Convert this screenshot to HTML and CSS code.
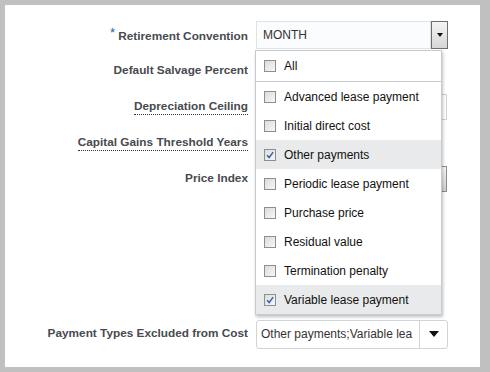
FILE: index.html
```html
<!DOCTYPE html>
<html>
<head>
<meta charset="utf-8">
<link rel="stylesheet" href="styles.css">
</head>
<body>
<div class="frame">
  <div class="form">
    <div class="row r1">
      <label class="lbl"><span class="req">*</span> Retirement Convention</label>
      <div class="field">
        <div class="select1">
          <span class="sel-text">MONTH</span>
          <span class="sel-btn"><span class="tri-s"></span></span>
        </div>
      </div>
    </div>
    <div class="row r2">
      <label class="lbl">Default Salvage Percent</label>
      <div class="field"><div class="input narrow"></div></div>
    </div>
    <div class="row r3">
      <label class="lbl"><span class="dotted">Depreciation Ceiling</span></label>
      <div class="field"><div class="input wide"></div></div>
    </div>
    <div class="row r4">
      <label class="lbl"><span class="dotted">Capital Gains Threshold Years</span></label>
      <div class="field"><div class="input narrow"></div></div>
    </div>
    <div class="row r5">
      <label class="lbl">Price Index</label>
      <div class="field"><div class="input wide grad"></div></div>
    </div>
    <div class="row r6">
      <label class="lbl">Payment Types Excluded from Cost</label>
      <div class="field">
        <div class="select2">
          <span class="sel2-text">Other payments;Variable lea</span>
          <span class="sel2-btn"><span class="tri-l"></span></span>
        </div>
      </div>
    </div>
  </div>

  <div class="popup">
    <div class="item all"><span class="cb"></span>All</div>
    <div class="list">
      <div class="item"><span class="cb"></span>Advanced lease payment</div>
      <div class="item"><span class="cb"></span>Initial direct cost</div>
      <div class="item sel"><span class="cb on"><svg viewBox="0 0 12 12" width="12" height="12"><path d="M2.5 6.2 L5 9 L9.8 2.6" fill="none" stroke="#3d5fa8" stroke-width="1.8"/></svg></span>Other payments</div>
      <div class="item"><span class="cb"></span>Periodic lease payment</div>
      <div class="item"><span class="cb"></span>Purchase price</div>
      <div class="item"><span class="cb"></span>Residual value</div>
      <div class="item"><span class="cb"></span>Termination penalty</div>
      <div class="item sel"><span class="cb on"><svg viewBox="0 0 12 12" width="12" height="12"><path d="M2.5 6.2 L5 9 L9.8 2.6" fill="none" stroke="#3d5fa8" stroke-width="1.8"/></svg></span>Variable lease payment</div>
    </div>
  </div>
</div>
</body>
</html>
```

FILE: styles.css
```css
html, body {
  margin: 0;
  padding: 0;
}
body {
  background: #c0c0c0;
  width: 490px;
  height: 372px;
  overflow: hidden;
  font-family: "Liberation Sans", Arial, sans-serif;
}
.frame {
  position: relative;
  margin: 5px 10px 5px 5px;
  height: 362px;
  background: #ffffff;
}
.form {
  display: flex;
  flex-direction: column;
  padding-top: 12px;
}
.row {
  display: grid;
  grid-template-columns: 243px 192px;
  column-gap: 8px;
  align-items: center;
  height: 36px;
}
.r6 {
  margin-top: 122px;
  height: 30px;
}
.lbl {
  text-align: right;
  font-weight: bold;
  font-size: 11.8px;
  color: #474a4f;
  white-space: nowrap;
  margin-bottom: 2px;
}
.req {
  color: #1b5fb4;
  font-size: 13px;
  font-weight: normal;
  vertical-align: 3px;
}
.dotted {
  border-bottom: 1px dotted #333;
  padding-bottom: 1px;
}
.field {
  display: flex;
  align-items: center;
}
.select1 {
  display: flex;
  width: 192px;
  height: 28px;
}
.sel-text {
  flex: 1;
  border: 1px solid #dfe3e8;
  background: #fbfcfd;
  font-size: 12px;
  color: #333;
  display: flex;
  align-items: center;
  padding-left: 6px;
}
.sel-btn {
  width: 15px;
  border: 1px solid #6e6e6e;
  background: linear-gradient(#f4f4f4, #d6d6d6);
  display: flex;
  align-items: center;
  justify-content: center;
}
.tri-s {
  width: 0;
  height: 0;
  border-left: 3px solid transparent;
  border-right: 3px solid transparent;
  border-top: 4px solid #111;
}
.input {
  height: 24px;
  border: 1px solid #cfd3d8;
  background: #fff;
}
.narrow { width: 160px; }
.wide { width: 189px; }
.grad {
  border-color: #8a8a8a;
  background: linear-gradient(#f8f8f8, #d4d4d4);
}
.select2 {
  display: flex;
  width: 190px;
  height: 27px;
  border: 1px solid #d0d4d9;
  border-radius: 3px;
  background: #fff;
}
.sel2-text {
  flex: 1;
  font-size: 12px;
  color: #333;
  display: flex;
  align-items: center;
  padding-left: 4px;
  overflow: hidden;
  white-space: nowrap;
}
.sel2-btn {
  width: 27px;
  border-left: 1px solid #d0d4d9;
  display: flex;
  align-items: center;
  justify-content: center;
}
.tri-l {
  width: 0;
  height: 0;
  border-left: 5px solid transparent;
  border-right: 5px solid transparent;
  border-top: 6px solid #111;
}
.popup {
  position: absolute;
  left: 250px;
  top: 45px;
  width: 185px;
  background: #fff;
  border: 1px solid #c5cbd1;
  box-shadow: 1px 2px 3px rgba(0,0,0,0.25);
}
.item {
  display: flex;
  align-items: center;
  height: 29px;
  font-size: 12px;
  color: #111;
  padding-left: 8px;
}
.item.all {
  height: 30px;
  border-bottom: 1px solid #c5cbd1;
}
.item.sel {
  background: #e9eaeb;
}
.cb {
  width: 12px;
  height: 12px;
  box-sizing: border-box;
  border: 1px solid #8e8e8e;
  background: linear-gradient(135deg, #dcdcdc, #f7f7f7);
  margin-right: 8px;
  display: flex;
  align-items: center;
  justify-content: center;
}
.cb svg { display: block; }
```
